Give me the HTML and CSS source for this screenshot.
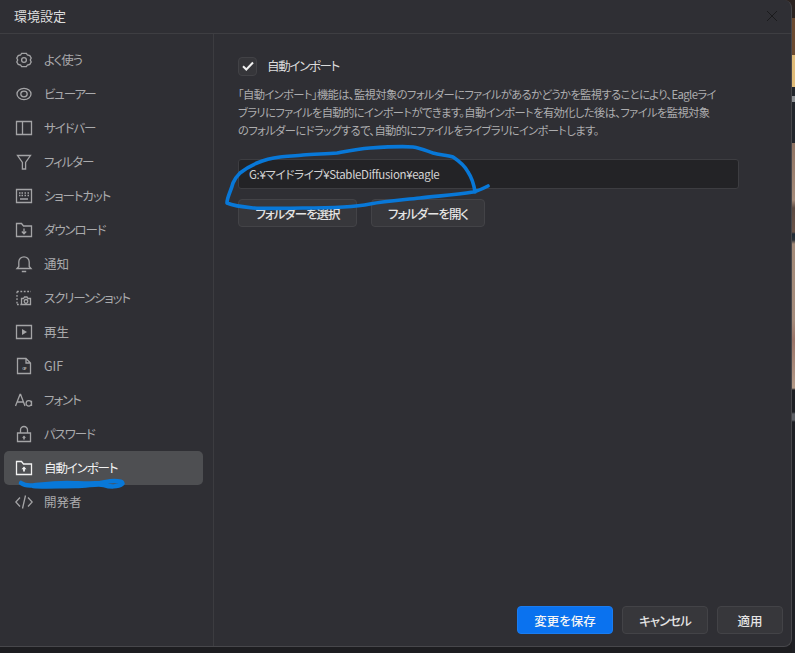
FILE: index.html
```html
<!DOCTYPE html>
<html lang="ja">
<head>
<meta charset="utf-8">
<title>環境設定</title>
<link rel="stylesheet" href="styles.css">
</head>
<body>
<div class="desktop">
  <div class="dialog">
    <header class="titlebar">
      <span class="title">環境設定</span>
      <svg class="close" width="12" height="12" viewBox="0 0 12 12"><path d="M1 1l10 10M11 1L1 11"/></svg>
    </header>
    <div class="main">
      <nav class="sidebar">
        <a class="item"><svg class="ico" viewBox="0 0 18 18"><path d="M6.600 2.400h4.800l1 1.600 2.400.6 1.400 2.400-.9 2 .9 2-1.400 2.400-2.400.6-1 1.600H6.600l-1-1.600-2.400-.6-1.400-2.400.9-2-.9-2 1.400-2.400 2.400-.6z"/><circle cx="9" cy="9" r="2.400"/></svg><span>よく使う</span></a>
        <a class="item"><svg class="ico" viewBox="0 0 18 18"><ellipse cx="9" cy="9" rx="7" ry="5.700"/><ellipse cx="9" cy="9" rx="3.200" ry="2.800"/></svg><span>ビューアー</span></a>
        <a class="item"><svg class="ico" viewBox="0 0 18 18"><path d="M1.500 2.500h15v13h-15zM7.500 2.500v13"/></svg><span>サイドバー</span></a>
        <a class="item"><svg class="ico" viewBox="0 0 18 18"><path d="M2.500 2.500h13L10.600 9.500v6.500H7.400V9.500z"/></svg><span>フィルター</span></a>
        <a class="item"><svg class="ico" viewBox="0 0 18 18"><path d="M1.500 2.500h15v13h-15zM4 6h1.500M6.500 6H8M9.500 6H11M12.500 6H14M4 8.500h1.500M6.500 8.500H8M9.500 8.500H11M12.500 8.500H14M5 12h8"/></svg><span>ショートカット</span></a>
        <a class="item"><svg class="ico" viewBox="0 0 18 18"><path d="M1.500 15.500V2.500h5l2 2.500h8v10.500zM9 7.500v5M6.800 10.500L9 12.800l2.200-2.300"/></svg><span>ダウンロード</span></a>
        <a class="item"><svg class="ico" viewBox="0 0 18 18"><path d="M2 13.500h14l-1.800-2V7a5.200 5.200 0 0 0-10.400 0v4.500zM6.800 16.500h4.400"/></svg><span class="kanji">通知</span></a>
        <a class="item"><svg class="ico" viewBox="0 0 18 18"><path class="dash" d="M2 2.500h14M2 2.500v13M2 15.500h4"/><path d="M6.500 15.500V9.500h2l1-1.500h2.500l1 1.500h2.500v6zM11 10.500a1.800 1.800 0 1 0 .01 0"/></svg><span>スクリーンショット</span></a>
        <a class="item"><svg class="ico" viewBox="0 0 18 18"><path d="M1.500 2.500h15v13h-15z"/><path class="fill" d="M7 6l5 3-5 3z"/></svg><span class="kanji">再生</span></a>
        <a class="item"><svg class="ico" viewBox="0 0 18 18"><path d="M2.500 1.500h8.500l4.500 4.500v10.500h-13zM11 1.500v4.500h4.500"/><text class="gif" x="9" y="12.500">GIF</text></svg><span class="kanji">GIF</span></a>
        <a class="item"><svg class="ico" viewBox="0 0 18 18"><path d="M.5 15L5 3.500h.6L10 15M2 11h6.500M16.500 9.800V15M16.500 12.400a2.700 2.700 0 1 1-5.400 0 2.700 2.700 0 0 1 5.400 0z"/></svg><span>フォント</span></a>
        <a class="item"><svg class="ico" viewBox="0 0 18 18"><path d="M2.500 8h13v8.500h-13zM5.500 8V5a3.500 3.500 0 0 1 7 0v3"/><path class="fill" d="M9 10.500l2 2.200h-1.200v1.800H8.200v-1.800H7z"/></svg><span>パスワード</span></a>
        <a class="item active"><svg class="ico" viewBox="0 0 18 18"><path d="M1.500 15.500V2.500h5l2 2.500h8v10.500z"/><path class="fill" d="M9 7.500l2.500 2.700H9.900v2.300H8.100v-2.300H6.500z"/></svg><span>自動インポート</span></a>
        <a class="item"><svg class="ico" viewBox="0 0 18 18"><path d="M5 4.500L.8 9 5 13.500M13 4.500L17.200 9 13 13.500M10.500 2.500l-3 13"/></svg><span class="kanji">開発者</span></a>
      </nav>
      <section class="pane">
        <div class="pane-body">
          <label class="check-row">
            <span class="checkbox"><svg width="12" height="10" viewBox="0 0 12 10"><path d="M1 5.200l3.300 3.300L11 1.500"/></svg></span>
            <span class="check-label">自動インポート</span>
          </label>
          <p class="desc">「自動インポート」機能は、監視対象のフォルダーにファイルがあるかどうかを監視することにより、Eagleライブラリにファイルを自動的にインポートができます。自動インポートを有効化した後は、ファイルを監視対象のフォルダーにドラッグするで、自動的にファイルをライブラリにインポートします。</p>
          <div class="path-input">G:¥マイドライブ¥StableDiffusion¥eagle</div>
          <div class="btn-row">
            <button class="btn btn-select">フォルダーを選択</button>
            <button class="btn btn-open">フォルダーを開く</button>
          </div>
        </div>
        <footer class="footer">
          <button class="btn primary">変更を保存</button>
          <button class="btn btn-cancel">キャンセル</button>
          <button class="btn btn-apply">適用</button>
        </footer>
      </section>
    </div>
  </div>
  <svg class="ink" width="795" height="653" viewBox="0 0 795 653">
    <path class="ink-thin" d="M488 186C482 189 478 191 473 192C455 195 437 196 420 198C402 200 386 201 370 204C355 207 335 208 303 208C285 208 268 209 253 208C243 207 234 206 227 203C227 197 231 191 233 183C235 178 237 176 240 173C245 169 250 166 257 163C264 160 272 158 280 157C288 156 296 156 303 155C314 154 326 154 337 153C348 151 358 149 370 148C385 147 400 146 413 147C420 148 427 151 433 153C440 155 447 155 453 157C459 161 465 166 468 172C472 178 474 185 475 192"/>
    <path class="ink-thick" d="M21 483C25 486 30 486 36 485C46 484 56 483 67 483C78 483 90 484 100 483C106 482 110 481 114 481C119 481 124 482 122 484C118 487 110 487 104 485C98 483 88 486 76 486C60 486 44 487 33 486"/>
  </svg>
</div>
</body>
</html>
```
FILE: styles.css
```css
* { box-sizing: border-box; }
html, body { margin: 0; height: 100%; }
body {
  font-family: "Noto Sans CJK JP", "Noto Sans", sans-serif;
  font-feature-settings: "palt";
  overflow: hidden;
}
.desktop {
  position: relative;
  width: 795px;
  height: 653px;
  background: linear-gradient(to bottom,
    #2b2320 0, #2b2320 18px,
    #6b4a30 18px, #6b4a30 55px,
    #e0bb78 55px, #e0bb78 87px,
    #22252b 87px, #22252b 96px,
    #8d9094 96px, #8d9094 102px,
    #22252b 102px, #22252b 143px,
    #8f7362 143px, #a58b7a 200px,
    #5c4a42 208px, #6a5348 232px,
    #1e2a36 234px, #2c3238 240px,
    #a38a78 244px, #a58c7c 320px,
    #9a7468 340px, #b39a88 388px,
    #1e1f24 390px, #1e1f24 412px,
    #5e6066 414px, #5e6066 420px,
    #1e1f24 422px, #1e1f24 100%);
}
.dialog {
  width: 792px;
  height: 647px;
  background: #2f2f34;
  border-right: 1px solid #47474b;
  border-bottom: 1px solid #47474b;
  border-radius: 0 8px 8px 0;
  display: flex;
  flex-direction: column;
  overflow: hidden;
  box-shadow: 0 6px 0 #1d1d20, 0 60px 0 #1d1d20;
}
.titlebar {
  height: 34px;
  flex: none;
  border-bottom: 1px solid #3e3e42;
  display: flex;
  align-items: center;
  justify-content: space-between;
  padding: 0 13px 2px 14px;
}
.title { font-size: 13px; color: #dedede; }
.close path { stroke: #1b1b1d; stroke-width: 1; fill: none; }
.main { flex: 1; display: flex; min-height: 0; }
.sidebar {
  width: 214px;
  flex: none;
  border-right: 1px solid #3c3c40;
  padding: 9px 10px 0 4px;
  display: flex;
  flex-direction: column;
}
.item {
  height: 34px;
  display: flex;
  align-items: center;
  gap: 11px;
  padding-left: 11px;
  border-radius: 5px;
  font-size: 12.500px;
  letter-spacing: -1.100px;
  color: #aaaaac;
}
.item span { position: relative; top: -1px; }
.item .kanji { letter-spacing: 0; }
.item.active { background: #4e4f52; color: #f2f2f2; }
.ico {
  width: 18px;
  height: 18px;
  flex: none;
  fill: none;
  stroke: #a4a4a6;
  stroke-width: 1.300;
}
.active .ico { stroke: #f2f2f2; }
.ico .fill { fill: #a4a4a6; stroke: none; }
.active .ico .fill { fill: #f2f2f2; }
.ico .dash { stroke-dasharray: 1.800 1.600; }
.ico .gif {
  font-size: 4px;
  font-weight: 700;
  text-anchor: middle;
  fill: #a4a4a6;
  stroke: none;
  font-family: "Liberation Sans", sans-serif;
}
.pane { flex: 1; min-width: 0; display: flex; flex-direction: column; }
.pane-body { flex: 1; padding: 22px 52px 0 24px; }
.check-row { display: flex; align-items: center; gap: 10px; height: 20px; }
.checkbox {
  width: 19px;
  height: 19px;
  border: 1px solid #424246;
  border-radius: 4px;
  background: #36363a;
  display: flex;
  align-items: center;
  justify-content: center;
}
.checkbox path { fill: none; stroke: #f0f0f0; stroke-width: 2; }
.check-label {
  font-size: 12.500px;
  letter-spacing: -1.300px;
  color: #dcdcdc;
  position: relative;
  top: -1px;
}
.desc {
  margin: 9px 0 0;
  width: 480.500px;
  font-size: 11.300px;
  letter-spacing: -.63px;
  line-height: 18px;
  color: #adadaf;
}
.path-input {
  margin-top: 20px;
  height: 30px;
  background: #232326;
  border: 1px solid #3d3d41;
  border-radius: 3px;
  padding-left: 10px;
  font-size: 11.500px;
  letter-spacing: -.33px;
  line-height: 28px;
  color: #d4d4d4;
}
.btn-row { display: flex; gap: 14px; margin-top: 10px; }
.btn {
  height: 28px;
  border: 1px solid #434347;
  border-radius: 4px;
  background: #37373b;
  color: #e4e4e4;
  font: 500 12.500px "Noto Sans CJK JP", "Noto Sans", sans-serif;
  font-feature-settings: "palt";
  padding: 0;
}
.btn-select { width: 119px; letter-spacing: -1px; }
.btn-open { width: 114px; letter-spacing: -1px; }
.footer {
  display: flex;
  justify-content: flex-end;
  gap: 9px;
  padding: 0 8px 12px 0;
}
.primary { width: 96px; background: #0a72ef; border-color: #1a7cf0; color: #f5f5f5; }
.btn-cancel { width: 86px; letter-spacing: -1px; }
.btn-apply { width: 66px; }
.ink { position: absolute; left: 0; top: 0; pointer-events: none; }
.ink path { fill: none; stroke: #0878d8; stroke-linecap: round; stroke-linejoin: round; }
.ink-thin { stroke-width: 3.600; }
.ink-thick { stroke-width: 4.500; }
```
